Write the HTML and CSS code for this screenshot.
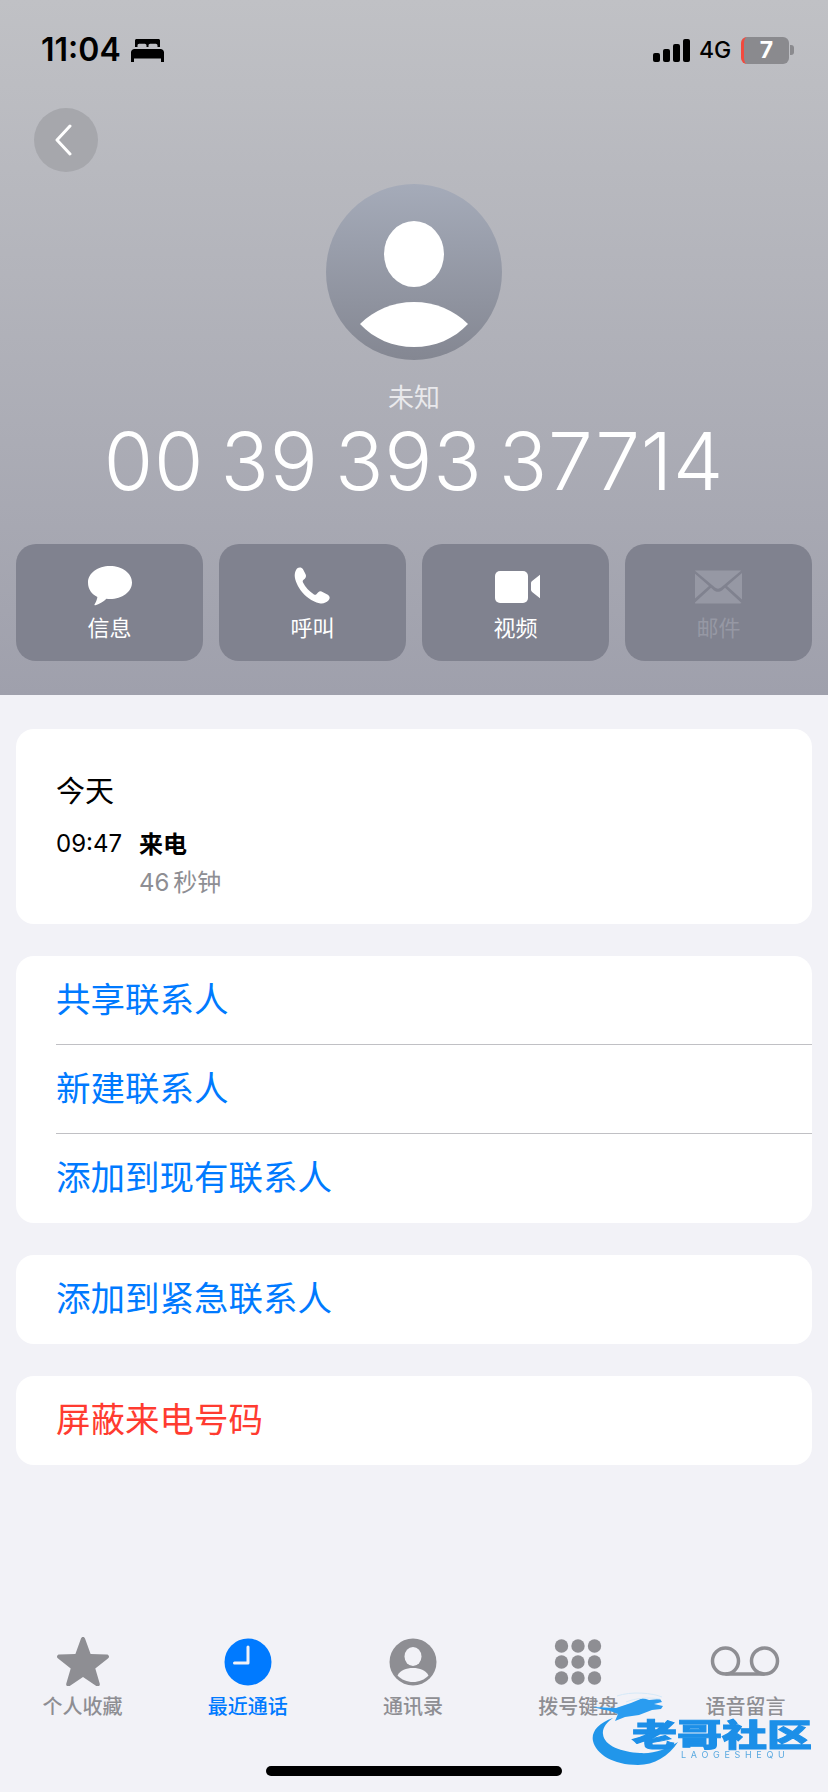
FILE: index.html
```html
<!DOCTYPE html>
<html lang="zh-CN">
<head>
    <meta charset="UTF-8">
    <meta name="viewport" content="width=device-width, initial-scale=1.0">
    <title>未知</title>
    <link rel="stylesheet" href="styles.css">
</head>
<body>
    <div class="page">
        <header class="hero">
            <div class="status-bar">
                <div class="status-left">
                    <span class="clock">11:04</span>
                    <svg class="bed" viewBox="0 0 33 23" width="33" height="23">
                        <path d="M4 1.500C4 .7 4.700 0 5.500 0h22c.8 0 1.500.7 1.500 1.500V8h-2.500V6.500c0-1-.8-1.700-1.700-1.700h-5.600c-1 0-1.700.7-1.700 1.700V8h-2V6.500c0-1-.8-1.700-1.700-1.700H8.200c-1 0-1.700.7-1.700 1.700V8H4z"/>
                        <path d="M3.500 10h26c1.900 0 3.500 1.500 3.500 3.400V23h-3v-3.500H3V23H0v-9.600C0 11.500 1.600 10 3.500 10z"/>
                    </svg>
                </div>
                <div class="status-right">
                    <div class="signal">
                        <i class="bar-1"></i><i class="bar-2"></i><i class="bar-3"></i><i class="bar-4"></i>
                    </div>
                    <span class="network">4G</span>
                    <div class="battery"><span>7</span></div>
                    <div class="battery-nub"></div>
                </div>
            </div>

            <div class="nav-row">
                <button class="back-btn" type="button">
                    <svg viewBox="0 0 18 32" width="18" height="32">
                        <path d="M16 2L3 16l13 14" fill="none" stroke="#fff" stroke-width="3" stroke-linecap="round" stroke-linejoin="round"/>
                    </svg>
                </button>
            </div>

            <div class="avatar">
                <svg viewBox="0 0 176 176" width="176" height="176">
                    <ellipse cx="88" cy="70" rx="30" ry="33" fill="#fff"/>
                    <path d="M34 140c14-14 33-22 54-22s40 8 54 22c-14 15-33 23-54 23s-40-8-54-23z" fill="#fff"/>
                </svg>
            </div>
            <div class="caller-label">未知</div>
            <div class="caller-number">00 39 393 37714</div>

            <div class="actions">
                <div class="action">
                    <svg viewBox="0 0 46 42" width="46" height="42">
                        <path d="M23 1c12.300 0 22 7.200 22 16.500S35.300 34 23 34c-1.200 0-2.400-.1-3.600-.2-3 3-7.500 5.500-11 6.400-.8.2-1.200-.5-.8-1 1.200-1.500 2.400-4.400 2.800-7.200C4.700 29.200 1 24.100 1 17.500 1 8.200 10.700 1 23 1z" fill="#fff"/>
                    </svg>
                    <span>信息</span>
                </div>
                <div class="action">
                    <svg viewBox="0 0 46 42" width="46" height="42">
                        <path d="M7 3.500c2-1.700 4.800-1.500 6 .8l2.600 5c.8 1.600.4 3.200-.8 4.400l-1.500 1.400c-.7.7-.7 1.500-.3 2.400 2.300 4.500 6.600 9.300 11 12 .9.500 1.700.4 2.400-.3l1.600-1.700c1.300-1.300 2.900-1.500 4.500-.6l5.300 2.900c2.300 1.300 2.500 3.900.6 5.800-2.300 2.300-5.500 3.400-9 2.600-7.500-1.700-14.500-7-19-13.200C6.700 19.200 4.200 13.500 4.800 9c.3-2.200 1-4 2.200-5.500z" fill="#fff"/>
                    </svg>
                    <span>呼叫</span>
                </div>
                <div class="action">
                    <svg viewBox="-3 -1 48 42" width="48" height="42">
                        <rect x="0" y="5" width="33" height="32" rx="5" fill="#fff"/>
                        <path d="M36 17.500c0-1 .3-1.700 1.100-2.400l8-6.500c1.200-1 2.900-.4 2.900 1.300v21.200c0 1.700-1.700 2.300-2.900 1.300l-8-6.500c-.8-.7-1.100-1.400-1.100-2.400z" fill="#fff"/>
                    </svg>
                    <span>视频</span>
                </div>
                <div class="action action-disabled">
                    <svg viewBox="1 -1 48 42" width="48" height="42">
                        <path d="M2 4.500h44c.4 0 .8.100 1 .3L27 21.500c-1.900 1.500-4.100 1.500-6 0L1 4.800c.2-.2.600-.3 1-.3z" fill="#9698a4"/>
                        <path d="M0 7l15 13L0 33.500zM48 7L33 20l15 13.500z" fill="#9698a4"/>
                        <path d="M17 21.800l3 2.600c2.400 1.900 5.600 1.900 8 0l3-2.600L47.500 37c-.4.300-.9.500-1.500.500H2c-.6 0-1.100-.2-1.500-.5z" fill="#9698a4"/>
                    </svg>
                    <span>邮件</span>
                </div>
            </div>
        </header>

        <main class="content">
            <section class="card history">
                <div class="history-day">今天</div>
                <div class="history-row">
                    <div class="history-time">09:47</div>
                    <div>
                        <div class="history-type">来电</div>
                        <div class="history-length">46 秒钟</div>
                    </div>
                </div>
            </section>

            <section class="card">
                <div class="row">共享联系人</div>
                <div class="row">新建联系人</div>
                <div class="row">添加到现有联系人</div>
            </section>

            <section class="card">
                <div class="row">添加到紧急联系人</div>
            </section>

            <section class="card">
                <div class="row row-danger">屏蔽来电号码</div>
            </section>
        </main>

        <nav class="tabbar">
            <div class="tab">
                <svg viewBox="0 0 52 50" width="52" height="50">
                    <path d="M26 1c1 0 1.700.6 2.100 1.700l5.500 15.200 16 .6c1.200 0 2 .6 2.300 1.500.3 1-.1 1.800-1 2.500L38.300 32.400l4.400 15.200c.3 1.100 0 2-.8 2.400-.8.600-1.700.5-2.600-.1L26 41l-13.300 8.900c-.9.600-1.800.7-2.600.1-.8-.4-1.100-1.300-.8-2.400l4.400-15.200L1.100 22.500c-.9-.7-1.300-1.500-1-2.500.3-.9 1.100-1.500 2.300-1.500l16-.6 5.500-15.200C24.300 1.600 25 1 26 1z"/>
                </svg>
                <span>个人收藏</span>
            </div>
            <div class="tab tab-active">
                <svg viewBox="0 0 50 50" width="50" height="50">
                    <circle cx="25" cy="26" r="23.500"/>
                    <path d="M25 11v16H11.500" fill="none" stroke="#f2f2f7" stroke-width="3" stroke-linecap="round" stroke-linejoin="round"/>
                </svg>
                <span>最近通话</span>
            </div>
            <div class="tab">
                <svg viewBox="0 0 50 50" width="50" height="50">
                    <circle cx="25" cy="26" r="23.500"/>
                    <ellipse cx="25" cy="20.500" rx="8.500" ry="9.500" fill="#f2f2f7"/>
                    <path d="M9.500 39.500C12.500 34 18 32 25 32s12.500 2 15.500 7.500C36.500 43.800 31 46 25 46S13.500 43.800 9.500 39.500z" fill="#f2f2f7"/>
                </svg>
                <span>通讯录</span>
            </div>
            <div class="tab">
                <svg viewBox="0 0 50 50" width="50" height="50">
                    <circle cx="8.500" cy="10" r="6.700"/><circle cx="25" cy="10" r="6.700"/><circle cx="41.500" cy="10" r="6.700"/>
                    <circle cx="8.500" cy="26" r="6.700"/><circle cx="25" cy="26" r="6.700"/><circle cx="41.500" cy="26" r="6.700"/>
                    <circle cx="8.500" cy="42" r="6.700"/><circle cx="25" cy="42" r="6.700"/><circle cx="41.500" cy="42" r="6.700"/>
                </svg>
                <span>拨号键盘</span>
            </div>
            <div class="tab">
                <svg viewBox="0 0 70 50" width="70" height="50">
                    <circle cx="15.500" cy="25" r="13" fill="none" stroke="#8e8e93" stroke-width="3.500"/>
                    <circle cx="54.500" cy="25" r="13" fill="none" stroke="#8e8e93" stroke-width="3.500"/>
                    <path d="M15.500 38h39" fill="none" stroke="#8e8e93" stroke-width="3.500"/>
                </svg>
                <span>语音留言</span>
            </div>
        </nav>

        <div class="home-bar"></div>

        <!-- 社区水印 -->
        <div class="watermark">
            <svg class="watermark-dragon" viewBox="0 0 220 76" width="220" height="76">
                <path d="M21 28C6 33-1 42 1 51c3 13 20 24 45 24 16 0 31-9 40-23-11 7-24 12-38 11-18-1-36-7-37-19-1-6 4-12 10-16z" fill="#2196ea"/>
                <path d="M0 17l24 1 15-5 12-5 6 2 11-1 2 3-8 2 9 2-2 3-9 1-13 5-14 2-10 4 3-7-8-3z" fill="#2a9cf0"/>
                <path d="M25 6c14-5 36-3 45 1M34 12c10-4 22-5 34-3" fill="none" stroke="#d5e9f8" stroke-width="1"/>
            </svg>
            <div class="watermark-name">老哥社区</div>
            <div class="watermark-sub">LAOGESHEQU</div>
        </div>
    </div>
</body>
</html>
```

FILE: styles.css
```css
* {
    margin: 0;
    padding: 0;
    box-sizing: border-box;
}
body {
    font-family: Inter, "Noto Sans CJK SC", sans-serif;
    background: #f2f2f7;
    color: #000;
}
.page {
    position: relative;
    width: 828px;
    height: 1792px;
    display: flex;
    flex-direction: column;
    overflow: hidden;
}

/* 顶部渐变区 */
.hero {
    height: 695px;
    padding: 36px 16px 0;
    display: flex;
    flex-direction: column;
    align-items: center;
    background: linear-gradient(180deg, #c0c1c5 0%, #9fa0ac 100%);
}
.status-bar {
    align-self: stretch;
    height: 28px;
    display: flex;
    justify-content: space-between;
    align-items: center;
    padding: 0 18px 0 25px;
}
.status-left {
    display: flex;
    align-items: center;
    gap: 10px;
}
.clock {
    font-size: 32px;
    font-weight: 600;
    line-height: 28px;
}
.status-right {
    display: flex;
    align-items: center;
}
.signal {
    display: flex;
    align-items: flex-end;
    gap: 3px;
    height: 23px;
}
.signal i {
    display: block;
    width: 7px;
    background: #000;
    border-radius: 2px;
}
.bar-1 { height: 9px; }
.bar-2 { height: 13px; }
.bar-3 { height: 18px; }
.bar-4 { height: 23px; }
.network {
    margin-left: 9px;
    font-size: 23px;
    font-weight: 500;
    letter-spacing: -0.2px;
}
.battery {
    width: 48px;
    height: 27px;
    margin-left: 10px;
    border-radius: 6px;
    border-left: 3px solid #f24a3e;
    background: #8a8a8e;
    color: #fff;
    font-size: 23px;
    font-weight: 700;
    line-height: 27px;
    text-align: center;
}
.battery-nub {
    width: 4px;
    height: 10px;
    margin-left: 1px;
    border-radius: 0 3px 3px 0;
    background: #8a8a8e;
}
.nav-row {
    align-self: stretch;
    margin-top: 44px;
    padding-left: 18px;
}
.back-btn {
    width: 64px;
    height: 64px;
    border: none;
    border-radius: 50%;
    background: #a6a7ac;
    display: flex;
    align-items: center;
    justify-content: center;
}
.back-btn svg {
    margin-right: 6px;
}
.avatar {
    width: 176px;
    height: 176px;
    margin-top: 12px;
    border-radius: 50%;
    overflow: hidden;
    background: linear-gradient(180deg, #a5abb9 0%, #848792 100%);
}
.avatar svg {
    display: block;
}
.caller-label {
    margin-top: 23px;
    font-size: 26px;
    line-height: 30px;
    color: #e9e9ec;
}
.caller-number {
    margin-top: 3px;
    font-size: 80px;
    font-weight: 350;
    line-height: 90px;
    letter-spacing: 0.8px;
    word-spacing: -7px;
    color: #fff;
    white-space: nowrap;
}
.actions {
    align-self: stretch;
    margin-top: 38px;
    display: grid;
    grid-template-columns: repeat(4, 1fr);
    gap: 16px;
}
.action {
    height: 117px;
    padding-top: 21px;
    border-radius: 20px;
    background: #80828f;
    color: #fff;
    display: flex;
    flex-direction: column;
    align-items: center;
}
.action svg {
    display: block;
}
.action span {
    margin-top: 6px;
    font-size: 22px;
    line-height: 30px;
}
.action-disabled {
    color: #9698a4;
}

/* 列表卡片 */
.content {
    padding: 34px 16px 0;
    display: flex;
    flex-direction: column;
    gap: 32px;
}
.card {
    background: #fff;
    border-radius: 18px;
    overflow: hidden;
}
.history {
    height: 195px;
    padding: 44px 40px 0;
}
.history-day {
    font-size: 29px;
    line-height: 38px;
}
.history-row {
    display: flex;
    margin-top: 15px;
}
.history-time {
    width: 83px;
    font-size: 24px;
    line-height: 36px;
}
.history-type {
    font-size: 24px;
    font-weight: 700;
    line-height: 38px;
}
.history-length {
    font-size: 24px;
    line-height: 38px;
    word-spacing: -3px;
    color: #8e8e93;
}
.row {
    height: 89px;
    margin-left: 40px;
    font-size: 34.5px;
    line-height: 88px;
    color: #007aff;
    border-bottom: 1px solid #c0c0c4;
}
.row:last-child {
    border-bottom: none;
}
.row-danger {
    color: #ff3b30;
}

/* 底部标签栏 */
.tabbar {
    position: absolute;
    left: 0;
    right: 2px;
    top: 1636px;
    display: grid;
    grid-template-columns: repeat(5, 1fr);
}
.tab {
    display: flex;
    flex-direction: column;
    align-items: center;
    color: #8e8e93;
    fill: #8e8e93;
}
.tab:last-child {
    padding-left: 4px;
}
.tab svg {
    display: block;
}
.tab span {
    margin-top: 7px;
    font-size: 20px;
    font-weight: 500;
    line-height: 28px;
}
.tab-active {
    color: #007aff;
    fill: #007aff;
}
.home-bar {
    position: absolute;
    left: 266px;
    top: 1766px;
    width: 296px;
    height: 10px;
    border-radius: 5px;
    background: #000;
}
.watermark {
    position: absolute;
    left: 592px;
    top: 1690px;
    width: 220px;
    height: 76px;
    filter: blur(0.6px);
}
.watermark-dragon {
    position: absolute;
    left: 0;
    top: 0;
}
.watermark-name {
    position: absolute;
    left: 40px;
    top: 29px;
    font-size: 45px;
    font-weight: 900;
    line-height: 45px;
    color: #1c8fe8;
    white-space: nowrap;
    -webkit-text-stroke: 1.5px #1c8fe8;
    transform: scaleY(0.68);
    transform-origin: left top;
}
.watermark-sub {
    position: absolute;
    left: 89px;
    top: 61px;
    font-size: 9px;
    line-height: 8px;
    letter-spacing: 4.7px;
    color: #5aa9e0;
    white-space: nowrap;
}
```
